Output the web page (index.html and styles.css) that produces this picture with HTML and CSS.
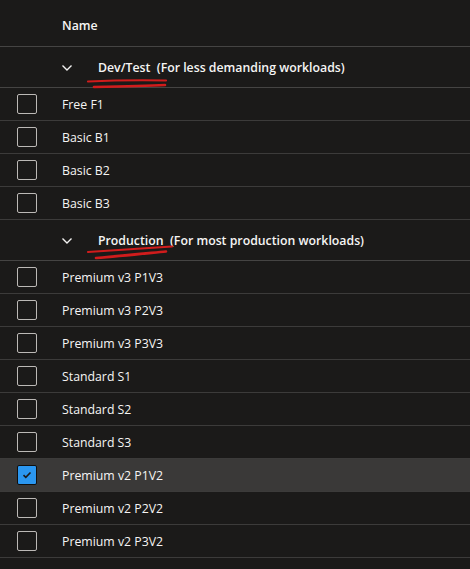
FILE: index.html
```html
<!DOCTYPE html>
<html lang="en">
<head>
<meta charset="utf-8">
<title>Pricing tiers</title>
<link rel="stylesheet" href="styles.css">
</head>
<body>
<div class="table">
  <div class="header-row"><span class="col-name">Name</span></div>

  <div class="group-row">
    <svg class="chevron" width="10" height="6" viewBox="0 0 10 6"><path d="M0.5 0.5 L5 5 L9.5 0.5" fill="none" stroke="#f3f2f1" stroke-width="1.4"/></svg>
    <span class="group-title">Dev/Test&nbsp; (For less demanding workloads)</span>
  </div>
  <div class="row"><span class="check"></span><span class="label">Free F1</span></div>
  <div class="row"><span class="check"></span><span class="label">Basic B1</span></div>
  <div class="row"><span class="check"></span><span class="label">Basic B2</span></div>
  <div class="row"><span class="check"></span><span class="label">Basic B3</span></div>

  <div class="group-row">
    <svg class="chevron" width="10" height="6" viewBox="0 0 10 6"><path d="M0.5 0.5 L5 5 L9.5 0.5" fill="none" stroke="#f3f2f1" stroke-width="1.4"/></svg>
    <span class="group-title">Production&nbsp; (For most production workloads)</span>
  </div>
  <div class="row"><span class="check"></span><span class="label">Premium v3 P1V3</span></div>
  <div class="row"><span class="check"></span><span class="label">Premium v3 P2V3</span></div>
  <div class="row"><span class="check"></span><span class="label">Premium v3 P3V3</span></div>
  <div class="row"><span class="check"></span><span class="label">Standard S1</span></div>
  <div class="row"><span class="check"></span><span class="label">Standard S2</span></div>
  <div class="row"><span class="check"></span><span class="label">Standard S3</span></div>
  <div class="row selected"><span class="check checked"><svg width="10" height="8" viewBox="0 0 10 8"><path d="M1.5 4.2 L3.8 6.3 L8.5 1.5" fill="none" stroke="#1b1a19" stroke-width="1.6"/></svg></span><span class="label">Premium v2 P1V2</span></div>
  <div class="row"><span class="check"></span><span class="label">Premium v2 P2V2</span></div>
  <div class="row"><span class="check"></span><span class="label">Premium v2 P3V2</span></div>

  <svg class="annotations" width="470" height="569" viewBox="0 0 470 569">
    <path d="M88 81.5 C110 80.5 140 80 166 80.5" fill="none" stroke="#d01c1c" stroke-width="2.2" stroke-linecap="round"/>
    <path d="M94 87 C120 86.5 145 86 165 85" fill="none" stroke="#d01c1c" stroke-width="2.6" stroke-linecap="round"/>
    <path d="M88 252 C115 250 145 248.5 172 246.5" fill="none" stroke="#d01c1c" stroke-width="2.2" stroke-linecap="round"/>
    <path d="M96 258 C120 256 145 253.5 166 251.5" fill="none" stroke="#d01c1c" stroke-width="2.6" stroke-linecap="round"/>
  </svg>
</div>
</body>
</html>
```

FILE: styles.css
```css
html, body {
  margin: 0;
  padding: 0;
  background: #1b1a19;
}

body {
  font-family: "Open Sans", "Noto Sans", sans-serif;
  font-size: 12.3px;
  color: #f6f5f4;
  width: 470px;
  height: 569px;
  overflow: hidden;
}

.table {
  position: relative;
  display: flex;
  flex-direction: column;
}

.header-row {
  height: 47px;
  display: flex;
  align-items: center;
  padding: 5px 0 0 62px;
  box-sizing: border-box;
  border-bottom: 1px solid #454443;
}

.col-name {
  font-weight: 600;
}

.group-row {
  height: 41px;
  box-sizing: border-box;
  display: flex;
  align-items: center;
  padding: 1px 0 0 62px;
  border-bottom: 1px solid #454443;
}

.chevron {
  display: block;
  margin-right: 26px;
  margin-top: 1px;
}

.group-title {
  font-weight: 600;
}

.row {
  height: 33px;
  box-sizing: border-box;
  display: flex;
  align-items: center;
  border-bottom: 1px solid #3c3b3a;
  padding-left: 17px;
}

.row.selected {
  background: #3a3938;
}

.check {
  width: 20px;
  height: 20px;
  box-sizing: border-box;
  border: 1px solid #bcb9b6;
  border-radius: 2px;
  margin-right: 25px;
  display: flex;
  align-items: center;
  justify-content: center;
  flex-shrink: 0;
}

.check.checked {
  background: #2b97f0;
  border-color: #10100f;
}

.label {
  font-weight: 500;
}

.annotations {
  position: absolute;
  left: 0;
  top: 0;
  pointer-events: none;
}
```
